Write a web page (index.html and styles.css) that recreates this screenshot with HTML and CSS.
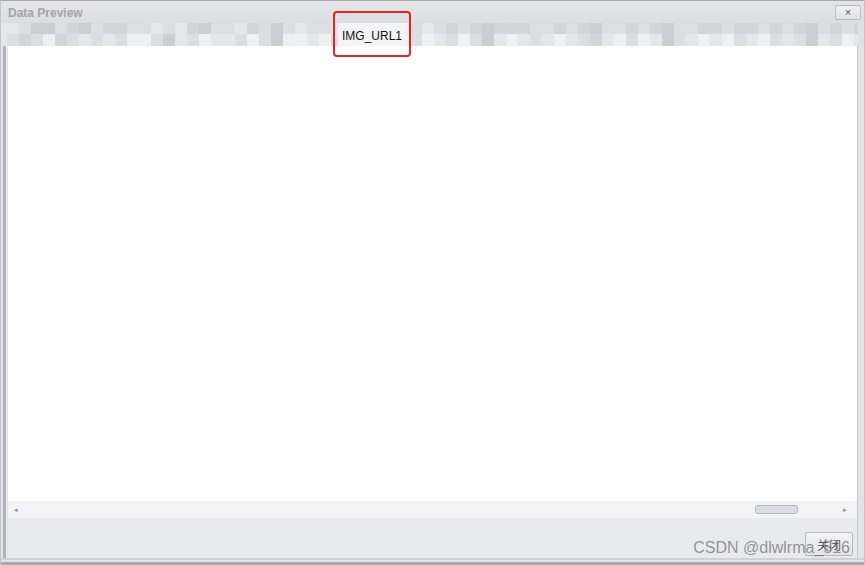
FILE: index.html
```html
<!DOCTYPE html>
<html>
<head>
<meta charset="utf-8">
<link rel="stylesheet" href="styles.css">
</head>
<body>
<div class="window">
  <div class="titlebar">
    <span class="title">Data Preview</span>
    <span class="close">&#215;</span>
  </div>
  <div class="header">
    <div class="mosaic left">
      <i class="m2"></i><i class="m3"></i><i class="m3"></i><i class="m4"></i><i class="m5"></i><i class="m3"></i><i class="m5"></i><i class="m6"></i><i class="m3"></i><i class="m4"></i><i class="m4"></i><i class="m3"></i><i class="m5"></i><i class="m2"></i><i class="m3"></i><i class="m3"></i><i class="m4"></i><i class="m2"></i><i class="m4"></i><i class="m3"></i><i class="m3"></i><i class="m1"></i><i class="m3"></i><i class="m1"></i><i class="m2"></i><i class="m3"></i><i class="m3"></i><i class="m5"></i><i class="m2"></i><i class="m2"></i><i class="m4"></i><i class="m3"></i><i class="m5"></i><i class="m1"></i><i class="m3"></i><i class="m2"></i><i class="m3"></i><i class="m2"></i><i class="m2"></i><i class="m3"></i><i class="m4"></i><i class="m1"></i><i class="m3"></i><i class="m3"></i><i class="m5"></i><i class="m5"></i><i class="m3"></i><i class="m6"></i><i class="m2"></i><i class="m1"></i><i class="m3"></i><i class="m2"></i><i class="m3"></i><i class="m1"></i><i class="m2"></i><i class="m3"></i>
    </div>
    <div class="colcell">IMG_URL1</div>
    <div class="mosaic right">
      <i class="m3"></i><i class="m3"></i><i class="m2"></i><i class="m1"></i><i class="m3"></i><i class="m2"></i><i class="m4"></i><i class="m3"></i><i class="m3"></i><i class="m1"></i><i class="m4"></i><i class="m3"></i><i class="m5"></i><i class="m5"></i><i class="m4"></i><i class="m2"></i><i class="m4"></i><i class="m1"></i><i class="m4"></i><i class="m2"></i><i class="m3"></i><i class="m3"></i><i class="m3"></i><i class="m2"></i><i class="m4"></i><i class="m1"></i><i class="m3"></i><i class="m2"></i><i class="m4"></i><i class="m3"></i><i class="m5"></i><i class="m4"></i><i class="m3"></i><i class="m2"></i><i class="m3"></i><i class="m1"></i><i class="m4"></i><i class="m3"></i><i class="m3"></i><i class="m1"></i><i class="m4"></i><i class="m2"></i><i class="m5"></i><i class="m5"></i><i class="m3"></i><i class="m3"></i><i class="m3"></i><i class="m2"></i><i class="m4"></i><i class="m1"></i><i class="m4"></i><i class="m2"></i><i class="m3"></i><i class="m1"></i><i class="m4"></i><i class="m3"></i><i class="m4"></i><i class="m2"></i><i class="m3"></i><i class="m1"></i><i class="m4"></i><i class="m3"></i><i class="m3"></i><i class="m2"></i><i class="m4"></i><i class="m3"></i><i class="m5"></i><i class="m5"></i><i class="m3"></i><i class="m2"></i><i class="m4"></i><i class="m3"></i><i class="m3"></i><i class="m1"></i><i class="m4"></i><i class="m2"></i>
    </div>
    <div class="highlight"></div>
  </div>
  <div class="body">
    <div class="frame-line"></div>
    <div class="grid"></div>
  </div>
  <div class="scroll">
    <div class="frame-line"></div>
    <div class="scroll-track">
      <span class="arrow">&#9666;</span>
      <span class="thumb"></span>
      <span class="arrow">&#9656;</span>
    </div>
  </div>
  <div class="footer">
    <div class="frame-line"></div>
    <div class="footer-inner">
      <button class="btn">关闭</button>
    </div>
    <span class="watermark">CSDN @dlwlrma_516</span>
  </div>
  <div class="bottom"></div>
</div>
</body>
</html>
```

FILE: styles.css
```css
html, body {
  margin: 0;
  padding: 0;
  width: 865px;
  height: 565px;
  overflow: hidden;
  background: #dedfe4;
  font-family: "Liberation Sans", Arial, "Noto Sans CJK SC", sans-serif;
}

.window {
  width: 865px;
  height: 565px;
  box-sizing: border-box;
  border-top: 1px solid #a8a9b0;
  border-left: 1px solid #c3c4ca;
  border-right: 1px solid #c3c4ca;
  display: flex;
  flex-direction: column;
  background: #e3e4e8;
  position: relative;
}

.titlebar {
  height: 22px;
  flex: none;
  display: flex;
  align-items: center;
  justify-content: space-between;
  padding: 0 3px 0 7px;
  background: linear-gradient(#e6e6ea, #dcdde2);
}

.title {
  font-weight: bold;
  font-size: 12px;
  color: #a2a5ae;
  margin-top: 2px;
}

.close {
  width: 24px;
  height: 13px;
  margin-top: 1px;
  border: 1px solid #b9bac1;
  border-radius: 2px;
  background: linear-gradient(#f0f1f3, #e1e2e6);
  font-size: 11px;
  line-height: 12px;
  text-align: center;
  color: #555;
}

.header {
  height: 23px;
  flex: none;
  display: flex;
  position: relative;
  padding-left: 6px;
  background: #e6e7eb;
}

.mosaic {
  display: grid;
  grid-template-rows: 11px 12px;
  grid-auto-flow: column;
  grid-auto-columns: 12px;
  overflow: hidden;
}

.mosaic.left { width: 331px; }
.mosaic.right { flex: 1; border-right: 6px solid #e0e1e5; }

.mosaic i { display: block; }
.m1 { background: #f0f1f3; }
.m2 { background: #e6e7ea; }
.m3 { background: #dddee2; }
.m4 { background: #d4d5da; }
.m5 { background: #cdced4; }
.m6 { background: #eeeff1; }

.colcell {
  width: 72px;
  box-sizing: border-box;
  background: #f4f4f6;
  font-size: 12px;
  color: #111;
  padding: 6px 0 0 4px;
}

.highlight {
  position: absolute;
  left: 332px;
  top: -12px;
  width: 74px;
  height: 42px;
  border: 2px solid #e8221f;
  border-radius: 4px;
}

.body {
  flex: 1;
  display: flex;
}

.frame-line {
  width: 3px;
  flex: none;
  margin-left: 2px;
  margin-right: 1px;
  background: #b1b2b9;
  border-right: 1px solid #f2f2f4;
}

.grid {
  flex: 1;
  background: #ffffff;
  border-right: 1px solid #c8c9ce;
  margin-right: 6px;
}

.scroll {
  height: 17px;
  flex: none;
  display: flex;
}

.scroll-track {
  flex: 1;
  display: flex;
  align-items: center;
  background: #f3f3f5;
  margin-right: 6px;
  border-right: 1px solid #c8c9ce;
  padding: 0 6px 0 6px;
}

.arrow {
  font-size: 7px;
  color: #8a8b92;
  width: 8px;
}

.thumb {
  margin-left: auto;
  margin-right: 45px;
  width: 43px;
  height: 9px;
  box-sizing: border-box;
  border: 1px solid #b7b8bf;
  border-radius: 3px;
  background: #dcdde2;
}

.footer {
  height: 40px;
  flex: none;
  display: flex;
  position: relative;
}

.footer-inner {
  flex: 1;
  background: #e9eaee;
  margin-right: 6px;
  border-right: 1px solid #c8c9ce;
  display: flex;
  justify-content: flex-end;
  align-items: flex-end;
  padding: 0 4px 2px 0;
}

.btn {
  width: 48px;
  height: 24px;
  box-sizing: border-box;
  border: 1px solid #b7b8bf;
  border-radius: 2px;
  background: linear-gradient(#f3f4f6, #e3e4e8);
  font-family: "Noto Sans CJK SC", sans-serif;
  font-size: 12px;
  color: #555;
  padding: 0;
}

.watermark {
  position: absolute;
  right: 14px;
  bottom: 1px;
  font-size: 16px;
  color: rgba(95, 95, 100, 0.65);
}

.bottom {
  height: 7px;
  flex: none;
  box-sizing: border-box;
  border-top: 2px solid #d1d2d7;
  background: #e3e4e8;
  border-bottom: 3px solid #a9aab1;
}
```
